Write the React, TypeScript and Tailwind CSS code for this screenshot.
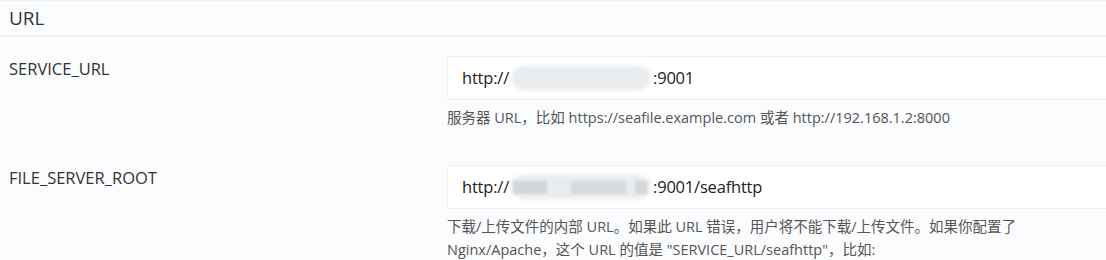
import React from 'react';

const font = { fontFamily: '"Open Sans", "Noto Sans CJK SC", sans-serif' };

function Blur({ dark }: { dark?: boolean }) {
  return (
    <span className="relative inline-block w-[140px] h-[24px] align-middle mx-[2px]">
      <span className="absolute inset-0 rounded-[12px] bg-[#e9ecef] blur-[2px]" />
      {dark && (
        <>
          <span className="absolute left-[2px] w-[34px] top-[6px] h-[13px] bg-[#d3d6da] blur-[1px]" />
          <span className="absolute left-[60px] w-[55px] top-[6px] h-[13px] bg-[#d6d9dd] blur-[1px]" />
          <span className="absolute right-[4px] w-[12px] top-[6px] h-[13px] bg-[#d3d6da] blur-[1px]" />
        </>
      )}
    </span>
  );
}

function Row({
  label,
  value,
  help,
}: {
  label: string;
  value: React.ReactNode;
  help: React.ReactNode;
}) {
  return (
    <div className="flex">
      <div className="w-[438px] shrink-0 pt-[1px] text-[16.5px] text-[#333]">{label}</div>
      <div className="flex flex-col">
        <div className="w-[700px] h-[44px] bg-white border border-[#eceef1] rounded-[3px] flex items-center pl-[14px] text-[16.5px] tracking-[-0.2px] text-[#222]">
          {value}
        </div>
        <div className="w-[585px] mt-[6px] text-[14.5px] leading-[23px] text-[#555]">{help}</div>
      </div>
    </div>
  );
}

export default function App() {
  return (
    <div className="w-[1106px] h-[260px] overflow-hidden bg-[#fbfcfe]" style={font}>
      <div className="h-[1px] bg-[#f0f2f5]" />
      <div className="h-[36px] pl-[9px] flex items-center text-[19px] text-[#333] border-b-2 border-[#eff1f4]">
        URL
      </div>
      <div className="pl-[9px] pt-[19px] flex flex-col gap-[36px]">
        <Row
          label="SERVICE_URL"
          value={
            <>
              http://
              <Blur />
              :9001
            </>
          }
          help="服务器 URL，比如 https://seafile.example.com 或者 http://192.168.1.2:8000"
        />
        <Row
          label="FILE_SERVER_ROOT"
          value={
            <>
              http://
              <Blur dark />
              :9001/seafhttp
            </>
          }
          help='下载/上传文件的内部 URL。如果此 URL 错误，用户将不能下载/上传文件。如果你配置了 Nginx/Apache，这个 URL 的值是 "SERVICE_URL/seafhttp"，比如:'
        />
      </div>
    </div>
  );
}
